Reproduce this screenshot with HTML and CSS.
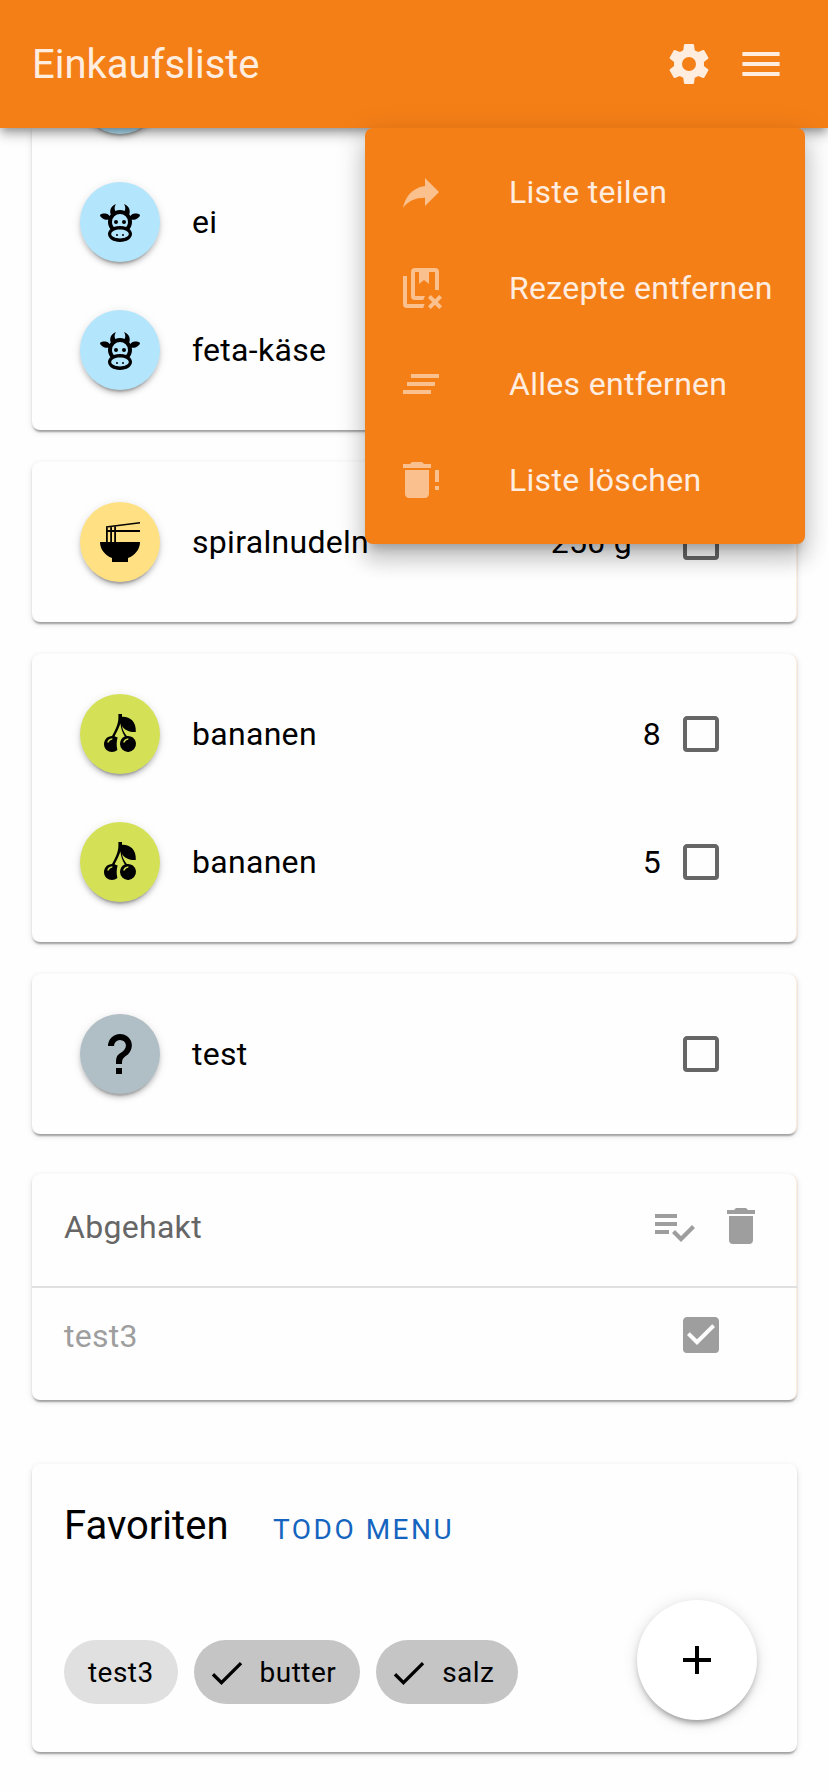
FILE: index.html
```html
<!DOCTYPE html>
<html lang="de">
<head>
<meta charset="utf-8">
<title>Einkaufsliste</title>
<link rel="stylesheet" href="styles.css">
</head>
<body>
<svg class="defs" aria-hidden="true">
  <symbol id="cog" viewBox="0 0 24 24"><path d="M12,15.5A3.5,3.5 0 0,1 8.5,12A3.5,3.5 0 0,1 12,8.5A3.5,3.5 0 0,1 15.5,12A3.5,3.5 0 0,1 12,15.5M19.43,12.97C19.47,12.65 19.5,12.33 19.5,12C19.5,11.67 19.47,11.34 19.43,11L21.54,9.37C21.73,9.22 21.78,8.95 21.66,8.73L19.66,5.27C19.54,5.05 19.27,4.96 19.05,5.05L16.56,6.05C16.04,5.66 15.5,5.32 14.87,5.07L14.5,2.42C14.46,2.18 14.25,2 14,2H10C9.75,2 9.54,2.18 9.5,2.42L9.13,5.07C8.5,5.32 7.96,5.66 7.44,6.05L4.95,5.05C4.73,4.96 4.46,5.05 4.34,5.27L2.34,8.73C2.21,8.95 2.27,9.22 2.46,9.37L4.57,11C4.53,11.34 4.5,11.67 4.5,12C4.5,12.33 4.53,12.65 4.57,12.97L2.46,14.63C2.27,14.78 2.21,15.05 2.34,15.27L4.34,18.73C4.46,18.95 4.73,19.03 4.95,18.95L7.44,17.94C7.96,18.34 8.5,18.68 9.13,18.93L9.5,21.58C9.54,21.82 9.75,22 10,22H14C14.25,22 14.46,21.82 14.5,21.58L14.87,18.93C15.5,18.67 16.04,18.34 16.56,17.94L19.05,18.95C19.27,19.03 19.54,18.95 19.66,18.73L21.66,15.27C21.78,15.05 21.73,14.78 21.54,14.63L19.43,12.97Z"/></symbol>
  <symbol id="menu" viewBox="0 0 24 24"><path d="M2.7,6H21.3V8H2.7V6M2.7,11H21.3V13H2.7V11M2.7,16H21.3V18H2.7V16Z"/></symbol>
  <symbol id="share" viewBox="0 0 24 24"><path d="M21,12L14,5V9C7,10 4,15 3,20C5.5,16.5 9,14.9 14,14.9V19L21,12Z"/></symbol>
  <symbol id="books-remove" viewBox="0 0 24 24"><path d="M3,6H5V20H13.8L13.1,22H5A2,2 0 0 1 3,20ZM9,2H19A2,2 0 0 1 21,4V13.1A6,6 0 0 0 19,13V4H16V10L13.5,8L11,10V4H9V16H14L13.1,18H9A2,2 0 0 1 7,16V4A2,2 0 0 1 9,2M16.88,15.46L19,17.59L21.12,15.46L22.54,16.88L20.41,19L22.54,21.12L21.12,22.54L19,20.41L16.88,22.54L15.46,21.12L17.59,19L15.46,16.88Z"/></symbol>
  <symbol id="clear-all" viewBox="0 0 24 24"><path d="M5,13H19V11H5M3,17H17V15H3M7,7V9H21V7"/></symbol>
  <symbol id="delete-alert" viewBox="0 0 24 24"><path d="M17 4V6H3V4H6.5L7.5 3H12.5L13.5 4H17M4 19V7H16V19C16 20.1 15.1 21 14 21H6C4.9 21 4 20.1 4 19M19 15H21V17H19V15M19 7H21V13H19V7Z"/></symbol>
  <symbol id="delete" viewBox="0 0 24 24"><path d="M19,4H15.5L14.5,3H9.5L8.5,4H5V6H19M6,19A2,2 0 0,0 8,21H16A2,2 0 0,0 18,19V7H6V19Z"/></symbol>
  <symbol id="playlist-check" viewBox="0 0 24 24"><path d="M14 10H3V12H14V10M14 6H3V8H14V6M3 16H10V14H3V16M21.5 11.5L23 13L16 20L11.5 15.5L13 14L16 17L21.5 11.5Z"/></symbol>
  <symbol id="box" viewBox="0 0 24 24"><path d="M19,3H5C3.89,3 3,3.89 3,5V19A2,2 0 0,0 5,21H19A2,2 0 0,0 21,19V5C21,3.89 20.1,3 19,3M19,5V19H5V5H19Z"/></symbol>
  <symbol id="box-checked" viewBox="0 0 24 24"><path d="M10,17L5,12L6.41,10.58L10,14.17L17.59,6.58L19,8M19,3H5C3.89,3 3,3.89 3,5V19A2,2 0 0,0 5,21H19A2,2 0 0,0 21,19V5C21,3.89 20.1,3 19,3Z"/></symbol>
  <symbol id="cow" viewBox="0 0 24 24"><path d="M10.5 18A.5.5 0 0 1 11 18.5A.5.5 0 0 1 10.5 19A.5.5 0 0 1 10 18.5A.5.5 0 0 1 10.5 18M13.5 18A.5.5 0 0 1 14 18.5A.5.5 0 0 1 13.5 19A.5.5 0 0 1 13 18.5A.5.5 0 0 1 13.5 18M10 11A1 1 0 0 1 11 12A1 1 0 0 1 10 13A1 1 0 0 1 9 12A1 1 0 0 1 10 11M14 11A1 1 0 0 1 15 12A1 1 0 0 1 14 13A1 1 0 0 1 13 12A1 1 0 0 1 14 11M18 18C18 20.21 15.31 22 12 22C8.69 22 6 20.21 6 18C6 17.1 6.45 16.27 7.2 15.6C6.45 14.6 6 13.35 6 12L6.12 10.78C5.58 10.93 4.93 10.93 4.4 10.78C3.38 10.5 1.84 9.35 2.07 8.55C2.3 7.75 4.21 7.6 5.23 7.9C5.82 8.07 6.45 8.5 6.82 8.96L7.39 8.15C6.79 7.05 7 4 10 3C9.63 3.58 8.91 4.97 9.67 6.47C10.39 6.17 11.17 6 12 6C12.83 6 13.61 6.17 14.33 6.47C15.09 4.97 14.37 3.58 14 3C17 4 17.21 7.05 16.61 8.15L17.18 8.96C17.55 8.5 18.18 8.07 18.77 7.9C19.79 7.6 21.7 7.75 21.93 8.55C22.16 9.35 20.62 10.5 19.6 10.78C19.07 10.93 18.42 10.93 17.88 10.78L18 12C18 13.35 17.55 14.6 16.8 15.6C17.55 16.27 18 17.1 18 18M12 15.8C9.6 15.8 7.6 16.8 7.6 18C7.6 19.2 9.6 20.2 12 20.2C14.4 20.2 16.4 19.2 16.4 18C16.4 16.8 14.4 15.8 12 15.8M12 14C13.12 14 14.17 14.21 15.07 14.56C15.65 13.87 16 13 16 12A4 4 0 0 0 12 8A4 4 0 0 0 8 12C8 13 8.35 13.87 8.93 14.56C9.83 14.21 10.88 14 12 14Z"/></symbol>
  <symbol id="noodles" viewBox="0 0 24 24"><path d="M2,12H22C22,15.7 19.4,18.8 16,20V22H8V20C4.6,18.8 2,15.7 2,12Z"/><path d="M5,4.1L22,2V2.8L5,4.9ZM5,6H22V7H5ZM5,4.2H5.9V12H5ZM7.1,4.2H8V12H7.1ZM9.1,4H10V12H9.1Z"/></symbol>
  <symbol id="cherries" viewBox="0 0 24 24"><path d="M11.2,2H13V3.4C17,3.2 20.2,5.8 19.9,11C17.2,11.2 14.4,10.3 13,8C13.3,9.8 14.2,11.6 15.4,13A4,4 0 1 1 12,17C12,15.1 13,13.7 14.4,13.2C13.2,11.5 12.5,9.3 12.2,6.8C11.4,9.3 10.3,11.3 9.3,13.1L10.8,13.8C10.2,16 10.2,18 10.7,20C8.5,21.9 4,21 4,17C4,14.8 5.8,13 8,13C9.5,10.3 11.2,7 11.2,4ZM5.6,16.3H6.4C6.6,15.5 7.3,15 8.2,14.8V14.1C6.8,14.2 5.7,15 5.6,16.3ZM13.6,16.3H14.4C14.6,15.5 15.3,15 16.2,14.8V14.1C14.8,14.2 13.7,15 13.6,16.3Z" fill-rule="evenodd"/></symbol>
  <symbol id="help" viewBox="0 0 24 24"><path d="M10,19H13V22H10V19M12,2C17.35,2.22 19.68,7.62 16.5,11.67C15.67,12.67 14.33,13.33 13.67,14.17C13,15 13,16 13,17H10C10,15.33 10,13.92 10.67,12.92C11.33,11.92 12.67,11.33 13.5,10.67C15.92,8.43 15.32,5.26 12,5A3,3 0 0,0 9,8H6A6,6 0 0,1 12,2Z"/></symbol>
  <symbol id="plus" viewBox="0 0 24 24"><path d="M19,13H13V19H11V13H5V11H11V5H13V11H19V13Z"/></symbol>
  <symbol id="check" viewBox="-2 -3 30 30"><path d="M1.73,12.91L8.1,19.28L22.79,4.59" fill="none" stroke="currentColor" stroke-width="2.5"/></symbol>
</svg>

<header class="bar">
  <h1 class="bar-title">Einkaufsliste</h1>
  <svg class="icon"><use href="#cog"/></svg>
  <svg class="icon"><use href="#menu"/></svg>
  <nav class="dropdown">
    <a class="dropdown-item"><svg class="icon"><use href="#share"/></svg>Liste teilen</a>
    <a class="dropdown-item"><svg class="icon"><use href="#books-remove"/></svg>Rezepte entfernen</a>
    <a class="dropdown-item"><svg class="icon"><use href="#clear-all"/></svg>Alles entfernen</a>
    <a class="dropdown-item"><svg class="icon"><use href="#delete-alert"/></svg>Liste löschen</a>
  </nav>
</header>

<main class="content">
  <section class="card card-scrolled">
    <div class="row row-partial"><span class="avatar dairy"></span></div>
    <div class="row"><span class="avatar dairy"><svg class="icon"><use href="#cow"/></svg></span><span class="name">ei</span></div>
    <div class="row"><span class="avatar dairy"><svg class="icon"><use href="#cow"/></svg></span><span class="name">feta-käse</span></div>
  </section>

  <section class="card">
    <div class="row"><span class="avatar pasta"><svg class="icon"><use href="#noodles"/></svg></span><span class="name">spiralnudeln</span><span class="amount amount-unit">250 g</span><svg class="icon tick"><use href="#box"/></svg></div>
  </section>

  <section class="card">
    <div class="row"><span class="avatar fruit"><svg class="icon"><use href="#cherries"/></svg></span><span class="name">bananen</span><span class="amount">8</span><svg class="icon tick"><use href="#box"/></svg></div>
    <div class="row"><span class="avatar fruit"><svg class="icon"><use href="#cherries"/></svg></span><span class="name">bananen</span><span class="amount">5</span><svg class="icon tick"><use href="#box"/></svg></div>
  </section>

  <section class="card">
    <div class="row"><span class="avatar other"><svg class="icon"><use href="#help"/></svg></span><span class="name">test</span><svg class="icon tick"><use href="#box"/></svg></div>
  </section>

  <section class="card done">
    <div class="done-head"><span class="name">Abgehakt</span><svg class="icon"><use href="#playlist-check"/></svg><svg class="icon"><use href="#delete"/></svg></div>
    <div class="done-row"><span class="name">test3</span><svg class="icon"><use href="#box-checked"/></svg></div>
  </section>

  <section class="card favorites">
    <div class="fav-head"><h2 class="fav-title">Favoriten</h2><a class="fav-link">TODO MENU</a></div>
    <div class="chips">
      <span class="chip">test3</span>
      <span class="chip chip-on"><svg class="chip-check"><use href="#check"/></svg>butter</span>
      <span class="chip chip-on"><svg class="chip-check"><use href="#check"/></svg>salz</span>
    </div>
  </section>
</main>

<button class="fab" aria-label="Hinzufügen"><svg class="icon"><use href="#plus"/></svg></button>
</body>
</html>
```
FILE: styles.css
```css
* { box-sizing: border-box; }
html, body { margin: 0; height: 1792px; overflow: hidden; }
body { background: #fefefe; color: #000; font: 400 32px/56px Roboto, sans-serif; letter-spacing: 0.3px; }
.defs { display: none; }
.icon { width: 48px; height: 48px; flex: none; fill: currentColor; }

.bar { position: relative; z-index: 2; display: flex; align-items: center; gap: 24px; height: 128px; padding: 0 43px 0 32px; background: #f57f17; color: #ffede0; box-shadow: 0 4px 8px -2px rgba(0,0,0,.3), 0 8px 10px rgba(0,0,0,.14), 0 2px 20px rgba(0,0,0,.12); }
.bar-title { flex: 1; margin: 0; padding-top: 2px; font-size: 40px; font-weight: 400; letter-spacing: 0; }
.dropdown { position: absolute; top: 128px; left: 365px; width: 440px; padding: 16px 0; border-radius: 8px; background: #f57f17; box-shadow: 0 10px 10px -6px rgba(0,0,0,.2), 0 16px 20px 2px rgba(0,0,0,.14), 0 6px 28px 4px rgba(0,0,0,.12); }
.dropdown-item { display: flex; align-items: center; gap: 64px; height: 96px; padding: 0 32px; white-space: nowrap; }
.dropdown-item .icon { color: #fac08d; }

.content { padding: 0 31px 0 32px; }
.card { margin-bottom: 32px; padding: 16px 0; border-radius: 8px; background: #fefefe; box-shadow: 0 4px 2px -2px rgba(0,0,0,.2), 0 2px 2px rgba(0,0,0,.14), 0 2px 6px rgba(0,0,0,.12), inset -1px 0 rgba(245,127,23,.15); }
.card-scrolled { border-top-left-radius: 0; border-top-right-radius: 0; padding-top: 0; }
.row { display: flex; align-items: center; height: 128px; padding: 0 72px 0 48px; }
.row-partial { height: 30px; align-items: flex-end; padding-bottom: 24px; }
.avatar { display: flex; align-items: center; justify-content: center; width: 80px; height: 80px; margin-right: 32px; flex: none; border-radius: 50%; box-shadow: 0 6px 2px -4px rgba(0,0,0,.2), 0 4px 4px rgba(0,0,0,.14), 0 2px 10px rgba(0,0,0,.12); }
.dairy { background: #b3e5fc; }
.pasta { background: #ffe082; }
.fruit { background: #d4e157; }
.other { background: #b0bec5; }
.name { flex: 1; }
.amount { margin-right: 16px; }
.amount-unit { margin-right: 45px; }
.tick { color: #666; }

.done { margin-top: 40px; padding: 0; height: 226px; }
.done-head { display: flex; align-items: center; gap: 20px; height: 114px; padding: 0 32px 8px; border-bottom: 2px solid #e0e0e0; color: #666; }
.done-head .name { padding-top: 2px; }
.done-head .icon { color: #9e9e9e; }
.done-row { display: flex; align-items: center; height: 96px; padding: 0 72px 0 32px; color: #9e9e9e; }
.done-row .icon { margin-bottom: 2px; }

.favorites { margin-top: 64px; height: 288px; padding: 34px 32px 0; box-shadow: 0 4px 2px -2px rgba(0,0,0,.2), 0 2px 2px rgba(0,0,0,.14), 0 2px 6px rgba(0,0,0,.12); }
.fav-head { display: flex; align-items: baseline; }
.fav-title { margin: 0; width: 209px; font-size: 40px; font-weight: 400; letter-spacing: 0; }
.fav-link { color: #1565c0; font-size: 28px; letter-spacing: 2.5px; }
.chips { display: flex; gap: 16px; margin-top: 82px; }
.chip { display: flex; align-items: center; height: 64px; padding: 2px 24px 0; border-radius: 32px; background: #e0e0e0; font-size: 28px; letter-spacing: 0.45px; }
.chip-on { background: #c5c5c5; padding-left: 14px; }
.chip-check { width: 40px; height: 40px; margin-right: 12px; }

.fab { position: absolute; left: 637px; top: 1600px; display: flex; align-items: center; justify-content: center; width: 120px; height: 120px; padding: 0; border: 0; border-radius: 50%; background: #fff; color: #000; box-shadow: 0 6px 5px -4px rgba(0,0,0,.25), 0 4px 6px rgba(0,0,0,.14), 0 2px 16px rgba(0,0,0,.12); }
```
